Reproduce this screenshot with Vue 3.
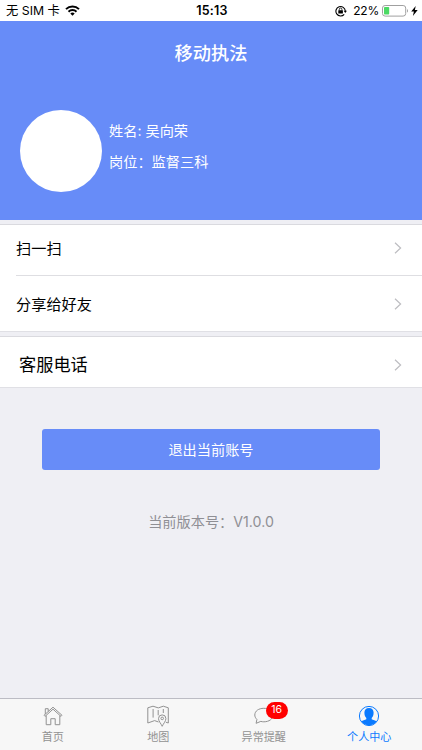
<script setup>
import { ref } from 'vue'

const user = { name: '吴向荣', post: '监督三科' }
const version = 'V1.0.0'

const groups = [
  { id: 'share', items: ['扫一扫', '分享给好友'] },
  { id: 'service', items: ['客服电话'] },
]

const tabs = [
  { id: 'home', label: '首页' },
  { id: 'map', label: '地图' },
  { id: 'alert', label: '异常提醒', badge: 16 },
  { id: 'mine', label: '个人中心' },
]

const active = ref('mine')
</script>

<template>
  <div class="page">
    <div class="status">
      <div class="status__left">
        <span>无 SIM 卡</span>
        <svg class="status__wifi" width="15" height="11" viewBox="0 0 15 11">
          <path d="M1 4.1a9.3 9.3 0 0 1 13 0" fill="none" stroke="#000" stroke-width="2" />
          <path d="M3.5 6.7a5.7 5.7 0 0 1 8 0" fill="none" stroke="#000" stroke-width="1.9" />
          <path d="M7.5 10.7L5.3 8.5a3.1 3.1 0 0 1 4.4 0z" />
        </svg>
      </div>
      <span class="status__time">15:13</span>
      <div class="status__right">
        <svg width="12" height="12" viewBox="0 0 12 12">
          <path d="M9.2 9.3A4.7 4.7 0 1 1 10.3 6" fill="none" stroke="#000" stroke-width="1.1" />
          <path d="M8.6 5.7h3.3L10.3 8z" />
          <rect x="3.3" y="5.2" width="4.6" height="3.4" rx="0.4" />
          <path d="M4.3 5.4V4.3a1.3 1.3 0 0 1 2.6 0v1.1" fill="none" stroke="#000" stroke-width="0.8" />
        </svg>
        <span class="status__percent">22%</span>
        <svg width="27" height="12" viewBox="0 0 27 12">
          <rect x="0.5" y="0.5" width="23.2" height="10.6" rx="2.6" fill="#fff" stroke="#a0a0a0" />
          <rect x="2" y="2" width="5.2" height="7.6" rx="0.8" fill="#4cd964" />
          <path d="M25 4v3.6c1.3-.5 1.3-3.1 0-3.6z" fill="#a0a0a0" />
        </svg>
        <svg class="status__bolt" width="7" height="10" viewBox="0 0 7 10">
          <path d="M4.7 0L0.2 5.5h2.7L1.9 10l4.8-6H3.9z" />
        </svg>
      </div>
    </div>

    <header class="header">
      <h1 class="header__title">移动执法</h1>
      <div class="profile">
        <div class="profile__avatar"></div>
        <div class="profile__info">
          <p>姓名: {{ user.name }}</p>
          <p>岗位：{{ user.post }}</p>
        </div>
      </div>
    </header>

    <ul v-for="group in groups" :key="group.id" class="menu" :class="'menu--' + group.id">
      <li v-for="item in group.items" :key="item" class="menu__item">
        <span class="menu__label">{{ item }}</span>
        <svg width="8" height="12" viewBox="0 0 8 12">
          <path d="M1 0.8L6.6 6 1 11.2" fill="none" stroke="#bdbdc1" stroke-width="1.2" />
        </svg>
      </li>
    </ul>

    <button type="button" class="logout">退出当前账号</button>
    <p class="version">当前版本号：{{ version }}</p>

    <nav class="tabs">
      <a
        v-for="tab in tabs"
        :key="tab.id"
        class="tabs__item"
        :class="{ 'tabs__item--active': active === tab.id }"
        @click="active = tab.id"
      >
        <span class="tabs__icon">
          <svg v-if="tab.id === 'home'" width="22" height="22" viewBox="0 0 22 22">
            <path d="M2 10.3L11 2.2l9 8.1-1 1.1-8-7.2-8 7.2z" />
            <path d="M4.2 10.5v9.2h4.6v-6h4.4v6h4.6v-9.2M3.3 9V3.7h2.9v2.7" />
          </svg>
          <svg v-else-if="tab.id === 'map'" width="22" height="22" viewBox="0 0 22 22">
            <path d="M11.5 17L7.6 15.6 .8 18V2.8L6 1.2l5.3 1.7 5-1.7 5 1.6V18l-2.5-.8M6.1 4v8.6M11.2 5v5.3M16.3 4v4" />
            <path d="M15.2 21.3c-1.2-2.7-3.7-5.2-3.7-7.7a3.7 3.7 0 0 1 7.4 0c0 2.5-2.5 5-3.7 7.7z" />
            <circle cx="15.2" cy="13.4" r="1.3" />
          </svg>
          <svg v-else-if="tab.id === 'alert'" width="22" height="22" viewBox="0 0 22 22">
            <path d="M3.1 18.3l.8-3.9C2.4 13 1.8 11.5 1.8 10c0-4 3.9-6.7 9-6.7s9.2 2.7 9.2 6.7-4 6.8-9.1 6.8c-1.1 0-2.2-.1-3.1-.4z" />
          </svg>
          <svg v-else width="22" height="22" viewBox="0 0 22 22">
            <circle cx="11" cy="11" r="9.6" />
            <path
              class="tabs__fill"
              d="M11 3c3 0 4.7 1.9 4.6 4.8 0 2.5-.9 4.2-1.9 5.2v1.3c1.3.7 3.7 1 5 2.3a9.8 9.8 0 0 1-15.4 0c1.3-1.3 3.7-1.6 5-2.3V13c-1-1-1.9-2.7-1.9-5.2C6.3 4.9 8 3 11 3z"
            />
          </svg>
          <em v-if="tab.badge" class="tabs__badge">{{ tab.badge }}</em>
        </span>
        <span class="tabs__label">{{ tab.label }}</span>
      </a>
    </nav>
  </div>
</template>

<style>
body {
  background: #efeff4;
}
</style>

<style scoped>
.page {
  display: flex;
  flex-direction: column;
  height: 100vh;
  overflow: hidden;
  background: #efeff4;
  font-family: Inter, 'Noto Sans CJK SC', sans-serif;
  color: #000;
}

p,
h1,
ul {
  margin: 0;
  padding: 0;
}

.status {
  flex: none;
  display: grid;
  grid-template-columns: 1fr auto 1fr;
  align-items: center;
  height: 21px;
  padding: 0 4px 0 6px;
  box-sizing: border-box;
  background: #fff;
  font-size: 12.3px;
  line-height: 20px;
}

.status__left,
.status__right {
  display: flex;
  align-items: center;
}

.status__wifi {
  margin-left: 5px;
}

.status__time {
  font-size: 12.5px;
  font-weight: 600;
  letter-spacing: 0.2px;
}

.status__right {
  justify-content: flex-end;
}

.status__percent {
  margin: 0 3px 0 6px;
  font-size: 12px;
  letter-spacing: -0.2px;
}

.status__bolt {
  margin-left: 2px;
}

.header {
  flex: none;
  height: 199px;
  background: #678cf8;
  color: #fff;
}

.header__title {
  padding-top: 18px;
  font-size: 18.2px;
  line-height: 28px;
  font-weight: 500;
  text-align: center;
}

.profile {
  display: flex;
  margin: 43px 0 0 20px;
}

.profile__avatar {
  width: 82px;
  height: 82px;
  border-radius: 50%;
  background: #fff;
}

.profile__info {
  padding: 5px 0 0 7px;
  font-size: 14.2px;
  line-height: 31px;
}

.menu {
  flex: none;
  margin-top: 4px;
  border-top: 1px solid #dadadf;
  border-bottom: 1px solid #e0e0e5;
  background: #fff;
  list-style: none;
}

.menu__item {
  display: flex;
  align-items: center;
  justify-content: space-between;
  box-sizing: border-box;
  height: 55px;
  margin-left: 16px;
  padding: 1px 20px 0 0;
  font-size: 15.2px;
}

.menu__label {
  padding-bottom: 2px;
}

.menu--share .menu__item:first-child {
  height: 51px;
  padding-top: 0;
  padding-bottom: 4px;
  border-bottom: 1px solid #dedee2;
}

.menu--service .menu__item {
  height: 50px;
  padding: 5px 20px 0 3px;
  font-size: 17.2px;
}

.logout {
  flex: none;
  height: 41px;
  margin: 41px 42px 0;
  padding: 0 0 1px;
  border: 0;
  border-radius: 3px;
  background: #678cf8;
  color: #fff;
  font: inherit;
  font-size: 14.2px;
}

.version {
  margin-top: 41px;
  font-size: 14.2px;
  line-height: 21px;
  text-align: center;
  color: #8f8f94;
}

.tabs {
  flex: none;
  display: grid;
  grid-template-columns: repeat(4, 1fr);
  height: 52px;
  margin-top: auto;
  box-sizing: border-box;
  border-top: 1px solid #bcbcc4;
  background: #f7f7f7;
}

.tabs__item {
  display: flex;
  flex-direction: column;
  align-items: center;
  padding-top: 6px;
  color: #929292;
}

.tabs__item--active {
  color: #0a7aff;
}

.tabs__icon {
  position: relative;
  height: 22px;
}

.tabs__icon svg {
  display: block;
  fill: none;
  stroke: currentColor;
  stroke-width: 1;
}

.tabs__icon .tabs__fill {
  fill: currentColor;
  stroke: none;
}

.tabs__badge {
  position: absolute;
  left: 13px;
  top: -3px;
  width: 22px;
  height: 17px;
  border-radius: 9px;
  background: #f00;
  color: #fff;
  font-size: 10.5px;
  line-height: 15px;
  font-style: normal;
  text-align: center;
}

.tabs__label {
  margin-top: 2px;
  font-size: 11.1px;
  line-height: 16px;
}
</style>
